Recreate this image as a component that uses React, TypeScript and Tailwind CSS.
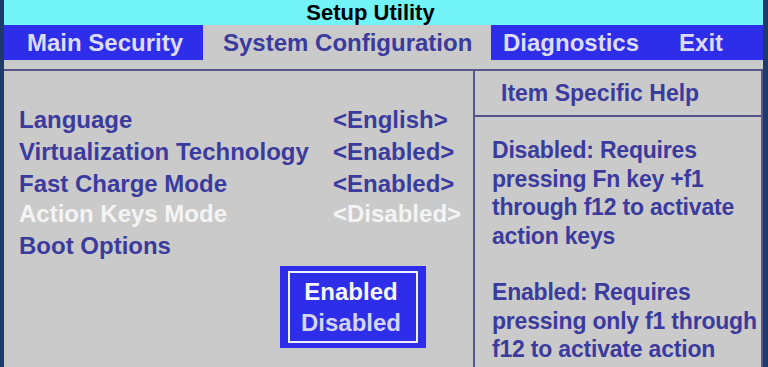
import React from 'react';

const font = { fontFamily: '"Liberation Sans", Arial, sans-serif' };

const rows = [
  { label: 'Language', value: '<English>', h: 'h-[32px]', active: false },
  { label: 'Virtualization Technology', value: '<Enabled>', h: 'h-[32px]', active: false },
  { label: 'Fast Charge Mode', value: '<Enabled>', h: 'h-[32px]', active: false },
  { label: 'Action Keys Mode', value: '<Disabled>', h: 'h-[28px]', active: true },
  { label: 'Boot Options', value: '', h: 'h-[36px]', active: false },
];

export default function App() {
  return (
    <div
      className="w-[768px] h-[367px] bg-[#1d3a6a] flex pl-[4px] pr-[5px] overflow-hidden"
      style={font}
    >
      <div className="flex flex-col w-[759px] bg-[#cacaca]">
        {/* Title bar */}
        <div className="h-[25px] bg-[#72f3f7] flex items-center justify-center pr-[26px] text-[22px] font-bold text-black leading-none">
          Setup Utility
        </div>

        {/* Menu tabs */}
        <div className="h-[35px] flex text-[24px] font-bold leading-none whitespace-nowrap">
          <div className="w-[199px] bg-[#2e2eea] text-[#dcdcf4] flex items-center pl-[23px]">
            Main Security
          </div>
          <div className="w-[288px] text-[#3b3b9e] flex items-center pl-[20px]">
            System Configuration
          </div>
          <div className="flex-1 bg-[#2e2eea] text-[#dcdcf4] flex items-center pl-[12px]">
            <span>Diagnostics</span>
            <span className="ml-[40px]">Exit</span>
          </div>
        </div>

        <div className="h-[9px]" />

        {/* Main content */}
        <div className="flex-1 flex border-t-2 border-[#55558c]">
          {/* Left panel */}
          <div className="w-[469px] flex flex-col text-[24px] font-bold leading-none whitespace-nowrap">
            <div className="h-[33px]" />
            {rows.map((r) => (
              <div
                key={r.label}
                className={`${r.h} flex items-center pl-[15px] ${
                  r.active ? 'text-[#f4f4f4]' : 'text-[#3b3b9e]'
                }`}
              >
                <span className="w-[314px]">{r.label}</span>
                <span>{r.value}</span>
              </div>
            ))}
            <div className="mt-[2px] ml-[276px] w-[146px] h-[82px] bg-[#2e2eea] px-[8px] py-[5px]">
              <div className="w-full h-full border-2 border-[#f0f0f8] flex flex-col items-center justify-center gap-[7px] pr-[4px]">
                <span className="text-[#f6f6fc]">Enabled</span>
                <span className="text-[#d4d4f4]">Disabled</span>
              </div>
            </div>
          </div>

          {/* Right panel */}
          <div className="flex-1 flex flex-col border-l-2 border-r-2 border-[#55558c] text-[23px] font-bold leading-none text-[#3b3b9e] whitespace-nowrap overflow-hidden">
            <div className="h-[46px] flex items-center pl-[26px] border-b-2 border-[#55558c]">
              Item Specific Help
            </div>
            <div className="pl-[17px] pt-[19px] leading-[28.5px] tracking-[-0.2px]">
              <div>Disabled: Requires</div>
              <div>pressing Fn key +f1</div>
              <div>through f12 to activate</div>
              <div>action keys</div>
              <div className="mt-[28px]">Enabled: Requires</div>
              <div>pressing only f1 through</div>
              <div>f12 to activate action</div>
            </div>
          </div>
        </div>
      </div>
    </div>
  );
}
